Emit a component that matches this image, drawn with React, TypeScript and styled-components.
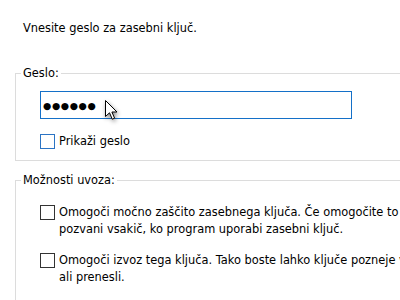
import styled, {createGlobalStyle} from 'styled-components';

const GlobalStyle = createGlobalStyle`
    html, body {
        margin: 0;
        padding: 0;
        background: #ffffff;
        width: 400px;
        height: 300px;
        overflow: hidden;
    }
    body {
        font-family: "DejaVu Sans", Verdana, sans-serif;
        font-size: 11.4px;
        color: #000;
    }
`;

const Page = styled.div`
    position: relative;
    width: 440px;
    padding: 20px 0 0 15px;
`;

const Intro = styled.p`
    margin: 0 0 0 8px;
    line-height: 16px;
`;

const Group = styled.fieldset<{top: number}>`
    margin: ${props => props.top}px 0 0 0;
    padding: 0;
    border: 1px solid #dcdcdc;
    min-width: 0;
`;

const Legend = styled.legend`
    margin-left: 5px;
    padding: 0 2px;
    line-height: 16px;
`;

const PasswordBox = styled.div`
    margin: 10px 0 0 24px;
    width: 312px;
    height: 28px;
    box-sizing: border-box;
    border: 1px solid #1470c8;
    display: flex;
    align-items: center;
    padding-left: 2px;
    font-size: 9.5px;
    letter-spacing: 0.6px;
`;

const CheckRow = styled.label<{top: number}>`
    display: flex;
    align-items: flex-start;
    gap: 4px;
    margin: ${props => props.top}px 0 0 24px;
    line-height: 17px;
    white-space: nowrap;
`;

const Box = styled.span<{focused?: boolean}>`
    flex: none;
    width: 15px;
    height: 15px;
    box-sizing: border-box;
    margin-top: 1px;
    border: 1px solid ${props => props.focused ? '#2b74c4' : '#333333'};
    background: #fff;
`;

const GroupBody = styled.div<{bottom: number}>`
    padding-bottom: ${props => props.bottom}px;
`;

const Cursor = styled.svg`
    position: absolute;
    left: 105px;
    top: 100px;
    filter: drop-shadow(1px 2px 2px rgba(0, 0, 0, 0.45));
`;

function App() {
    return (
        <Page>
            <GlobalStyle />
            <Intro>Vnesite geslo za zasebni ključ.</Intro>
            <Group top={29}>
                <Legend>Geslo:</Legend>
                <GroupBody bottom={10}>
                    <PasswordBox>●●●●●●</PasswordBox>
                    <CheckRow top={14}>
                        <Box focused />
                        <span>Prikaži geslo</span>
                    </CheckRow>
                </GroupBody>
            </Group>
            <Group top={11}>
                <Legend>Možnosti uvoza:</Legend>
                <GroupBody bottom={30}>
                    <CheckRow top={16}>
                        <Box />
                        <span>
                            Omogoči močno zaščito zasebnega ključa. Če omogočite to možnost, boste<br />
                            pozvani vsakič, ko program uporabi zasebni ključ.
                        </span>
                    </CheckRow>
                    <CheckRow top={14}>
                        <Box />
                        <span>
                            Omogoči izvoz tega ključa. Tako boste lahko ključe pozneje varnostno kopirali<br />
                            ali prenesli.
                        </span>
                    </CheckRow>
                </GroupBody>
            </Group>
            <Cursor width="14" height="21" viewBox="0 0 14 21">
                <path d="M0.5 0.5 L0.5 16.5 L4.5 12.8 L7.3 19.2 L9.6 18.2 L6.9 12 L12 12 Z" fill="#fff" stroke="#000" strokeWidth="1" strokeLinejoin="miter" />
            </Cursor>
        </Page>
    );
}

export default App;
